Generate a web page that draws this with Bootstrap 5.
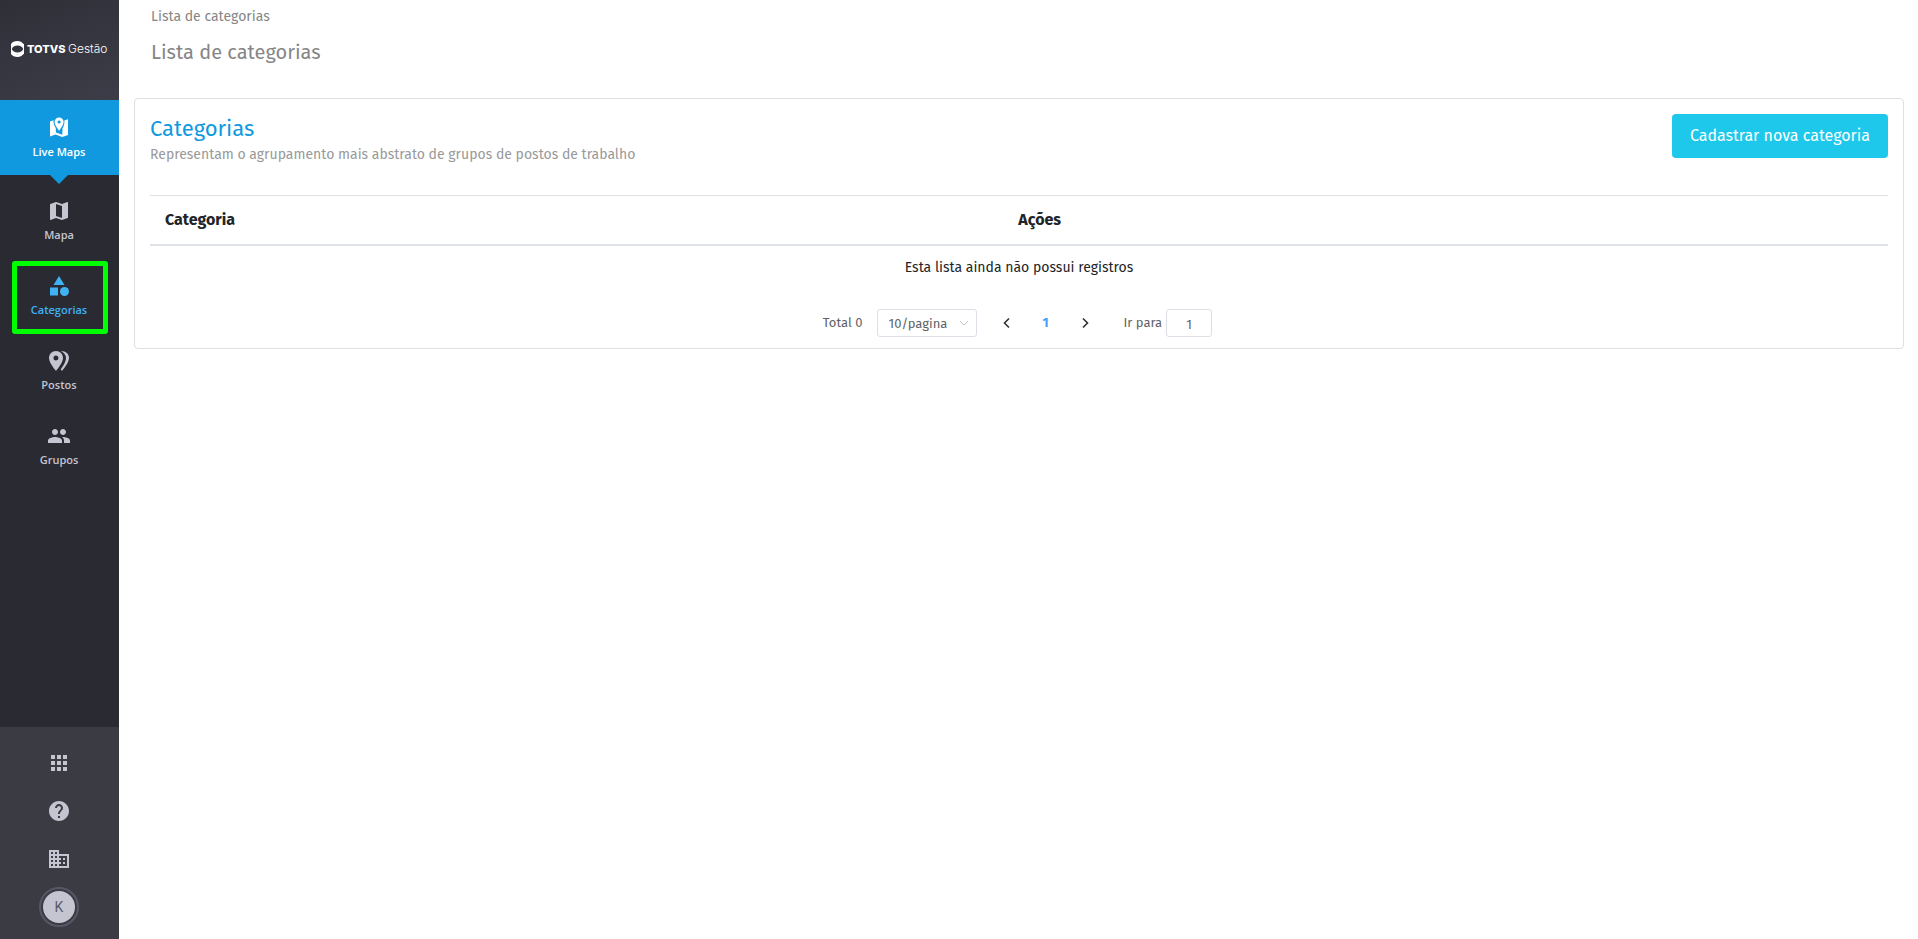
<!DOCTYPE html>
<html lang="pt-BR">
<head>
<meta charset="utf-8">
<meta name="viewport" content="width=device-width, initial-scale=1">
<title>Lista de categorias</title>
<link href="https://cdn.jsdelivr.net/npm/bootstrap@5.3.0/dist/css/bootstrap.min.css" rel="stylesheet">
<style>
  body { font-family: "Fira Sans", "Noto Sans", sans-serif; font-size: 14px; line-height: 20px; color: #212529; }
  a { text-decoration: none; }
  .app-side { width: 119px; background: #2a2a33; font-family: "Open Sans", sans-serif; font-size: 11px; line-height: 16px; font-weight: 600; }
  .side-logo { height: 100px; padding: 0 1px 2px 0; background: linear-gradient(160deg, #2f2f38, #3d3d49); }
  .side-item { height: 75px; padding: 16px 1px 0 0; color: #c5c5d2; }
  .side-item svg, .side-foot svg { width: 24px; height: 24px; fill: currentColor; }
  .side-item span { margin-top: 4px; }
  .side-module { background: #1199df; color: #fff; margin-bottom: 8px; }
  .side-module::after { content: ""; position: absolute; top: 100%; left: 50px; border: 9px solid transparent; border-top-color: #1199df; border-bottom: 0; }
  .side-item.current { color: #3fb2f3; }
  .side-item.current::after { content: ""; position: absolute; inset: 3px 11px -1px 12px; border: 5px solid #00ff00; border-radius: 3px; }
  .side-foot { background: #3b3b44; color: #c5c5d2; padding: 12px 1px 8px 0; }
  .foot-link { height: 48px; color: inherit; }
  .avatar-ring { width: 40px; height: 40px; border: 2px solid #565666; }
  .avatar-dot { width: 32px; height: 32px; background: #c5c5d2; color: #5b5b69; font: 400 14px/20px Roboto, sans-serif; }
  .page-head { padding: 7px 32px 0; color: #868686; }
  .page-head h1 { font-size: 20px; line-height: 28px; font-weight: 400; margin: 11px 0 32px; }
  .list-card { margin: 0 14px 0 15px; padding: 15px; border: 1px solid #dfdfdf; border-radius: 4px; }
  .list-card h2 { font-size: 22px; line-height: 30px; font-weight: 400; color: #1199df; margin: 0 0 1px; }
  .list-card .subtitle { font-size: 14px; color: #999; }
  .btn-new { height: 44px; padding: 0 18px; font-size: 16px; line-height: 24px; color: #fff; background: #1ec8eb; border: 0; border-radius: 4px; }
  .btn-new:hover { background: #18b5d6; color: #fff; }
  .list-table { margin: 30px 0 0; border-top: 1px solid #dee2e6; }
  .list-table > :not(caption) > * > * { padding: 14px 15px; border: 0; color: #212529; }
  .list-table > thead > tr > th { font-size: 16px; border-bottom: 2px solid #dee2e6; }
  .list-table > tbody > tr > td { padding: 12px 15px; }
  .list-table .col-name { width: 49.1%; }
  .pager { margin-top: 19px; padding-right: 3px; font-size: 13px; color: #606266; height: 28px; margin-bottom: -4px; }
  .pager .form-select, .pager .form-control { height: 28px; font-size: 13px; line-height: 20px; color: #606266; border: 1px solid #dcdfe6; border-radius: 3px; }
  .pager .form-select { width: 100px; margin: 0 14px; padding: 4px 22px 2px 11px; background-size: 10px 10px; background-position: right 7px center;
    background-image: url("data:image/svg+xml,%3Csvg xmlns='http://www.w3.org/2000/svg' viewBox='0 0 10 10'%3E%3Cpath fill='none' stroke='%23c0c4cc' d='M1 3l4 4 4-4'/%3E%3C/svg%3E"); }
  .pager .form-control { width: 46px; padding: 3px 2px 1px; margin-left: 4px; }
  .pager button { width: 32px; height: 28px; border: 0; background: none; color: #303133; padding: 0; }
  .pager button svg { width: 12px; height: 12px; fill: none; stroke: currentColor; stroke-width: 1.6; display: block; margin: 0 auto; }
  .pager .page-now { width: 46px; color: #409eff; font-weight: 700; }
  .pager .jump { margin-left: 23px; }
</style>
</head>
<body>
<div class="d-flex min-vh-100">
  <nav class="app-side d-flex flex-column flex-shrink-0" aria-label="Menu">
    <a href="#" class="side-logo d-flex align-items-center justify-content-center" aria-label="TOTVS Gestão">
      <svg width="98" height="18" viewBox="0 0 98 18" fill="#fff">
        <path fill-rule="evenodd" d="M7.500 1C10 1 12 2.200 13.500 4V14C12 16 10 17 7.500 17S2 16 1 14V12.500C2 13.500 4.500 14.200 7.500 14.200S13 12 14 9C13 6 10.500 4.200 7.500 4.200S2 4.700 1 5.600V4C2 2.200 4.500 1 7.500 1Z"/>
        <path fill-rule="evenodd" d="M1 4H14V14H1ZM7.500 5.500C4.700 5.500 2.500 7 1.800 9C2.500 11 4.700 12.500 7.500 12.500S12.500 11 13.200 9C12.500 7 10.300 5.500 7.500 5.500Z"/>
        <text x="17" y="13" font-family="Inter, sans-serif" font-size="11" font-weight="800">TOTVS</text>
        <text x="58" y="13" font-family="Inter, sans-serif" font-size="12" font-weight="300">Gestão</text>
      </svg>
    </a>
    <a href="#" class="side-item side-module position-relative d-flex flex-column align-items-center">
      <svg viewBox="0 0 24 24"><path d="M3 5.100V20.500L8.500 18.600 15.200 21 20.500 19.200Q21 19 21 18.500V3.300L17.300 4.600C17.700 7.500 17 10 15.500 12.500L15.300 18.700 9 16.500 8.700 12C7.200 9.500 6.200 7 6.600 4.300L3 5.500Z"/><path fill-rule="evenodd" d="M12.100 1.500A4.500 4.500 0 0 0 7.600 6C7.600 9.300 12.100 14.700 12.100 14.700S16.600 9.300 16.600 6A4.500 4.500 0 0 0 12.100 1.500ZM12.100 7.600A1.600 1.600 0 1 1 12.100 4.400 1.600 1.600 0 0 1 12.100 7.600Z"/></svg>
      <span>Live Maps</span>
    </a>
    <a href="#" class="side-item d-flex flex-column align-items-center">
      <svg viewBox="0 0 24 24"><path d="M20.500 3l-.16.030L15 5.100 9 3 3.360 4.900c-.21.070-.36.250-.36.480V20.500c0 .28.220.5.500.5l.16-.030L9 18.900l6 2.100 5.640-1.900c.21-.070.360-.25.360-.48V3.500c0-.28-.22-.5-.5-.5zM15 19l-6-2.110V5l6 2.110V19z"/></svg>
      <span>Mapa</span>
    </a>
    <a href="#" class="side-item current position-relative d-flex flex-column align-items-center" aria-current="page">
      <svg viewBox="0 0 24 24"><path d="M12 2l-5.500 9h11z"/><circle cx="17.500" cy="17.500" r="4.500"/><path d="M3 13.500h8v8H3z"/></svg>
      <span>Categorias</span>
    </a>
    <a href="#" class="side-item d-flex flex-column align-items-center">
      <svg viewBox="0 0 24 24"><path fill-rule="evenodd" d="M9 2C5 2 2 5.100 2 9.100 2 14.200 9 22 9 22S16 14.200 16 9.100C16 5.100 13 2 9 2ZM9 11.500A2.500 2.500 0 1 1 9 6.500 2.500 2.500 0 0 1 9 11.500Z"/><path d="M14 2C19 2 22 5 22 9.100 22 14.200 15 22 15 22L13.700 20.400C15.500 18 19 13 19 9.100 19 6 17 3.700 14 2Z"/></svg>
      <span>Postos</span>
    </a>
    <a href="#" class="side-item d-flex flex-column align-items-center">
      <svg viewBox="0 0 24 24"><path d="M16 11c1.660 0 2.990-1.340 2.990-3S17.660 5 16 5c-1.660 0-3 1.340-3 3s1.340 3 3 3zm-8 0c1.660 0 2.990-1.340 2.990-3S9.660 5 8 5C6.340 5 5 6.340 5 8s1.340 3 3 3zm0 2c-2.330 0-7 1.170-7 3.500V19h14v-2.500c0-2.330-4.670-3.500-7-3.500zm8 0c-.29 0-.62.020-.97.050 1.160.84 1.970 1.970 1.970 3.450V19h6v-2.500c0-2.330-4.670-3.500-7-3.500z"/></svg>
      <span>Grupos</span>
    </a>
    <div class="side-foot mt-auto">
      <a href="#" class="foot-link d-flex align-items-center justify-content-center" aria-label="Aplicativos">
        <svg viewBox="0 0 24 24"><path d="M4 8h4V4H4v4zm6 12h4v-4h-4v4zm-6 0h4v-4H4v4zm0-6h4v-4H4v4zm6 0h4v-4h-4v4zm6-10v4h4V4h-4zm-6 4h4V4h-4v4zm6 6h4v-4h-4v4zm0 6h4v-4h-4v4z"/></svg>
      </a>
      <a href="#" class="foot-link d-flex align-items-center justify-content-center" aria-label="Ajuda">
        <svg viewBox="0 0 24 24"><path d="M12 2C6.480 2 2 6.480 2 12s4.480 10 10 10 10-4.480 10-10S17.520 2 12 2zm1 17h-2v-2h2v2zm2.070-7.750l-.9.920C13.450 12.900 13 13.500 13 15h-2v-.5c0-1.100.450-2.100 1.170-2.830l1.240-1.260c.37-.36.590-.86.590-1.410 0-1.100-.9-2-2-2s-2 .9-2 2H8c0-2.210 1.790-4 4-4s4 1.790 4 4c0 .88-.36 1.680-.93 2.250z"/></svg>
      </a>
      <a href="#" class="foot-link d-flex align-items-center justify-content-center" aria-label="Empresa">
        <svg viewBox="0 0 24 24"><path d="M12 7V3H2v18h20V7H12zM6 19H4v-2h2v2zm0-4H4v-2h2v2zm0-4H4V9h2v2zm0-4H4V5h2v2zm4 12H8v-2h2v2zm0-4H8v-2h2v2zm0-4H8V9h2v2zm0-4H8V5h2v2zm10 12h-8v-2h2v-2h-2v-2h2v-2h-2V9h8v10zm-2-8h-2v2h2v-2zm0 4h-2v2h2v-2z"/></svg>
      </a>
      <a href="#" class="foot-link d-flex align-items-center justify-content-center">
        <span class="avatar-ring rounded-circle d-flex align-items-center justify-content-center"><span class="avatar-dot rounded-circle d-flex align-items-center justify-content-center">K</span></span>
      </a>
    </div>
  </nav>

  <main class="flex-grow-1">
    <header class="page-head">
      <div>Lista de categorias</div>
      <h1>Lista de categorias</h1>
    </header>
    <section class="list-card">
      <div class="d-flex justify-content-between align-items-start">
        <div>
          <h2>Categorias</h2>
          <div class="subtitle">Representam o agrupamento mais abstrato de grupos de postos de trabalho</div>
        </div>
        <button type="button" class="btn btn-new">Cadastrar nova categoria</button>
      </div>
      <table class="table list-table">
        <thead>
          <tr><th class="col-name" scope="col">Categoria</th><th scope="col">Ações</th></tr>
        </thead>
        <tbody>
          <tr><td colspan="2" class="text-center">Esta lista ainda não possui registros</td></tr>
        </tbody>
      </table>
      <div class="pager d-flex align-items-center justify-content-center">
        <span>Total 0</span>
        <select class="form-select" aria-label="Registros por página"><option>10/pagina</option></select>
        <button type="button" aria-label="Anterior"><svg viewBox="0 0 12 12"><path d="M8 1.500L3.500 6 8 10.500"/></svg></button>
        <button type="button" class="page-now">1</button>
        <button type="button" aria-label="Próxima"><svg viewBox="0 0 12 12"><path d="M4 1.500L8.500 6 4 10.500"/></svg></button>
        <label class="jump" for="goto">Ir para</label>
        <input id="goto" class="form-control text-center" type="text" value="1">
      </div>
    </section>
  </main>
</div>
<script src="https://cdn.jsdelivr.net/npm/bootstrap@5.3.0/dist/js/bootstrap.bundle.min.js"></script>
</body>
</html>
